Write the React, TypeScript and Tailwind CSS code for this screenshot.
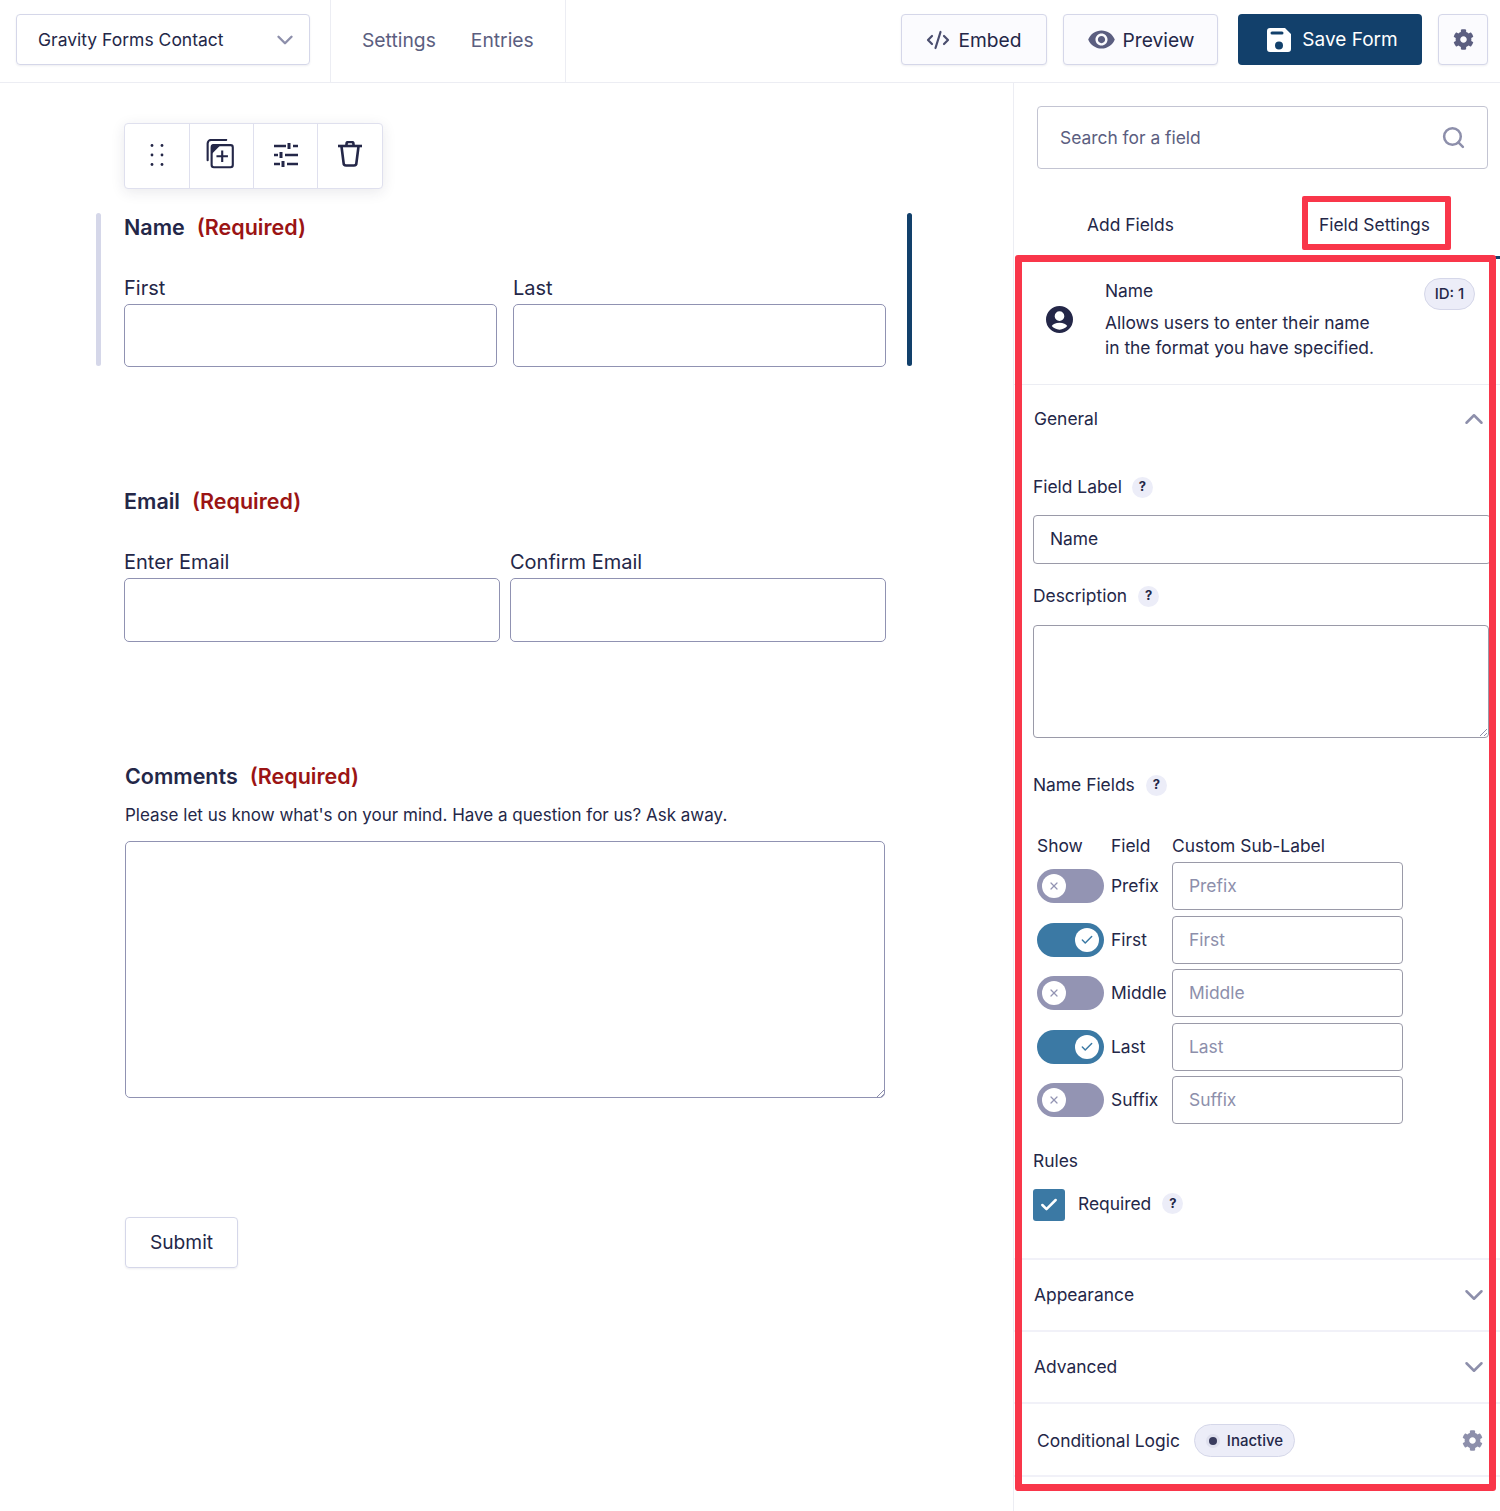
import { Check, ChevronDown, ChevronUp, CodeXml, Search, X } from 'lucide-react'
import { FaCog } from 'react-icons/fa'
import { MdVisibility } from 'react-icons/md'

const subFields = [
  { name: 'Prefix', on: false },
  { name: 'First', on: true },
  { name: 'Middle', on: false },
  { name: 'Last', on: true },
  { name: 'Suffix', on: false },
]

function Help() {
  return (
    <span className="w-[21px] h-[21px] rounded-full bg-[#ecedf8] text-[#242748] text-[13px] font-bold flex items-center justify-center">
      ?
    </span>
  )
}

function Toggle({ on }: { on: boolean }) {
  return (
    <span
      className={`w-[67px] h-[34px] rounded-full flex items-center px-[5px] ${
        on ? 'bg-[#3b79a4] justify-end' : 'bg-[#9394b3] justify-start'
      }`}
    >
      <span className="w-6 h-6 rounded-full bg-white flex items-center justify-center">
        {on ? (
          <Check className="w-3.5 h-3.5 text-[#3b79a4]" strokeWidth={2.5} />
        ) : (
          <X className="w-3 h-3 text-[#9394b3]" strokeWidth={2.5} />
        )}
      </span>
    </span>
  )
}

function ResizeHandle() {
  return (
    <svg viewBox="0 0 8 8" className="absolute right-px bottom-px w-2 h-2 stroke-[#8d8fab] fill-none">
      <path d="M1 8 8 1M5 8l3-3" />
    </svg>
  )
}

function SaveIcon() {
  return (
    <svg viewBox="0 0 24 24" className="w-6 h-6">
      <path
        fill="#fff"
        fillRule="evenodd"
        d="M3 0h15l6 6v15a3 3 0 0 1-3 3H3a3 3 0 0 1-3-3V3a3 3 0 0 1 3-3Zm2 3.500a1.500 1.500 0 0 0 0 3h10a1.500 1.500 0 0 0 0-3H5Zm7 10a4 4 0 1 0 0 8 4 4 0 0 0 0-8Z"
      />
    </svg>
  )
}

function GripIcon() {
  return (
    <svg viewBox="0 0 16 24" className="w-4 h-6 -mt-0.5 fill-[#242748]">
      <circle cx="3" cy="2.500" r="1.400" />
      <circle cx="13" cy="2.500" r="1.400" />
      <circle cx="3" cy="12" r="1.400" />
      <circle cx="13" cy="12" r="1.400" />
      <circle cx="3" cy="21.500" r="1.400" />
      <circle cx="13" cy="21.500" r="1.400" />
    </svg>
  )
}

function DuplicateIcon() {
  return (
    <svg viewBox="0 0 32 34" className="w-[30px] h-[30px] -mt-1 -ml-1 fill-none stroke-[#242748]" strokeWidth="2.400">
      <path d="M2 24V5a4 4 0 0 1 4-4h17" strokeLinecap="round" />
      <rect x="6.500" y="7" width="24" height="25" rx="2.500" />
      <path d="M7 15V9.500A2.500 2.500 0 0 1 9.500 7H15Z" fill="#242748" />
      <path d="M18.500 13v13M12 19.500h13" />
    </svg>
  )
}

function SlidersIcon() {
  return (
    <svg viewBox="0 0 24 24" className="w-6 h-6 -mt-0.5 fill-[#242748] stroke-[#242748]" strokeWidth="2.400">
      <path d="M0 3h12M19 3h5M0 12h4M11 12h13M0 21h6M13 21h11" />
      <path d="M15 0v6M7 9v6M9 18v6" strokeWidth="3" />
    </svg>
  )
}

function TrashIcon() {
  return (
    <svg viewBox="0 0 24 26" className="w-6 h-[26px] -mt-1 fill-none stroke-[#242748]" strokeWidth="2.600">
      <path d="M0 5h24" />
      <path d="M8.500 4.500V3a2 2 0 0 1 2-2h3a2 2 0 0 1 2 2v1.500" />
      <path d="M3.500 5.500 5.600 22a2.500 2.500 0 0 0 2.500 2.500h7.800a2.500 2.500 0 0 0 2.500-2.500l2.100-16.500" strokeLinejoin="round" />
    </svg>
  )
}

function UserIcon() {
  return (
    <svg viewBox="0 0 28 28" className="w-[27px] h-[27px]">
      <path
        fill="#242748"
        fillRule="evenodd"
        d="M14 0a14 14 0 1 1 0 28 14 14 0 0 1 0-28Zm0 5.500a5 5 0 1 0 0 10 5 5 0 0 0 0-10Zm0 11.800c-3.900 0-7 1.600-8 3.500 1.900 2.300 4.800 3.700 8 3.700s6.100-1.400 8-3.700c-1-1.900-4.100-3.500-8-3.500Z"
      />
    </svg>
  )
}

function FormInput({ className }: { className: string }) {
  return <div className={`border border-[#9092b2] rounded-[5px] bg-white ${className}`} />
}

function FieldTitle({ label }: { label: string }) {
  return (
    <div className="flex gap-3 font-semibold text-[21.500px] leading-7">
      <span className="text-[#242748]">{label}</span>
      <span className="text-[#9b1414]">(Required)</span>
    </div>
  )
}

function Section({ label }: { label: string }) {
  return (
    <div className="h-[72px] border-b-2 border-[#f1f1f8] pl-5 pr-[11px] pt-px flex items-center justify-between text-[17.400px] text-[#242748]">
      {label}
      <ChevronDown className="w-[30px] h-[30px] text-[#8d8fab]" strokeWidth={2} />
    </div>
  )
}

export default function App() {
  return (
    <div className="relative w-[1500px] h-[1511px] overflow-hidden bg-white font-['Inter',sans-serif] text-[#242748]">
      {/* Header */}
      <header className="h-[83px] border-b border-[#ecedf3] flex items-stretch">
        <div className="w-[331px] border-r border-[#ecedf3] pl-4 pb-[3px] flex items-center">
          <div className="w-[294px] h-[51px] border border-[#d5d7e9] rounded-[4px] shadow-[0_1px_2px_rgba(36,39,72,0.08)] pl-[21px] pr-[11px] flex items-center justify-between text-[17.500px]">
            <span className="mt-[2px]">Gravity Forms Contact</span>
            <ChevronDown className="w-[26px] h-[26px] text-[#8d8fab]" strokeWidth={2.2} />
          </div>
        </div>
        <div className="w-[235px] border-r border-[#ecedf3] pl-[31px] pb-[3px] flex items-center gap-[35px] text-[19.300px] text-[#5b5e80]">
          <span className="mt-px">Settings</span>
          <span className="mt-px">Entries</span>
        </div>
        <div className="flex-1 flex items-center justify-end gap-4 pr-3 pb-[3px]">
          <div className="w-[146px] h-[51px] border border-[#d5d7e9] rounded-[4px] bg-[#fbfbfe] shadow-[0_1px_2px_rgba(36,39,72,0.08)] flex items-center justify-center gap-2 text-[19.200px]">
            <CodeXml className="w-6 h-6 text-[#4a4d6e]" strokeWidth={2.2} />
            <span className="mt-px">Embed</span>
          </div>
          <div className="w-[155px] h-[51px] border border-[#d5d7e9] rounded-[4px] bg-[#fbfbfe] shadow-[0_1px_2px_rgba(36,39,72,0.08)] flex items-center justify-center gap-[7px] text-[19.200px]">
            <MdVisibility className="w-[29px] h-[29px] text-[#5b5e80]" />
            <span className="mt-px">Preview</span>
          </div>
          <div className="w-[184px] h-[51px] rounded-[4px] bg-[#12406b] text-white flex items-center justify-center gap-[11px] pl-[5px] text-[19px] ml-1">
            <SaveIcon />
            <span className="mt-px">Save Form</span>
          </div>
          <div className="w-[50px] h-[51px] border border-[#d5d7e9] rounded-[4px] bg-[#fbfbfe] shadow-[0_1px_2px_rgba(36,39,72,0.08)] flex items-center justify-center">
            <FaCog className="w-[21px] h-[21px] text-[#5b5e80]" />
          </div>
        </div>
      </header>

      <div className="flex h-[1428px]">
        {/* Form canvas */}
        <main className="w-[1013px] pl-[124px] pt-10">
          <div className="w-[259px] h-[66px] flex border border-[#dfe0ee] rounded-[4px] bg-white shadow-[0_3px_14px_rgba(36,39,72,0.1)]">
            <div className="w-[65px] border-r border-[#dfe0ee] flex items-center justify-center"><GripIcon /></div>
            <div className="w-[64px] border-r border-[#dfe0ee] flex items-center justify-center"><DuplicateIcon /></div>
            <div className="w-[64px] border-r border-[#dfe0ee] flex items-center justify-center"><SlidersIcon /></div>
            <div className="flex-1 flex items-center justify-center"><TrashIcon /></div>
          </div>

          {/* Name */}
          <div className="relative mt-[24px] h-[153px] w-[762px]">
            <span className="absolute -left-[28px] top-0 w-[5px] h-[153px] rounded-[3px] bg-[#d5d7e9]" />
            <span className="absolute left-[783px] top-0 w-[5px] h-[153px] rounded-[3px] bg-[#12406b]" />
            <FieldTitle label="Name" />
            <div className="flex gap-4 mt-[33px]">
              <div className="w-[373px]">
                <div className="text-[20px] leading-7 mb-[2px]">First</div>
                <FormInput className="h-[63px]" />
              </div>
              <div className="w-[373px]">
                <div className="text-[20px] leading-7 mb-[2px]">Last</div>
                <FormInput className="h-[63px]" />
              </div>
            </div>
          </div>

          {/* Email */}
          <div className="mt-[121px] w-[762px]">
            <FieldTitle label="Email" />
            <div className="flex gap-[10px] mt-[33px]">
              <div className="w-[376px]">
                <div className="text-[20px] leading-7 mb-[2px]">Enter Email</div>
                <FormInput className="h-[64px]" />
              </div>
              <div className="w-[376px]">
                <div className="text-[20px] leading-7 mb-[2px]">Confirm Email</div>
                <FormInput className="h-[64px]" />
              </div>
            </div>
          </div>

          {/* Comments */}
          <div className="mt-[120px] ml-px w-[760px]">
            <FieldTitle label="Comments" />
            <p className="mt-[13px] text-[17px] leading-6">
              Please let us know what's on your mind. Have a question for us? Ask away.
            </p>
            <div className="relative mt-[14px]">
              <FormInput className="h-[257px]" />
              <ResizeHandle />
            </div>
          </div>

          <div className="mt-[119px] ml-px w-[113px] h-[51px] border border-[#d5d7e9] rounded-[4px] shadow-[0_1px_2px_rgba(36,39,72,0.08)] flex items-center justify-center text-[19.200px]">
            Submit
          </div>
        </main>

        {/* Sidebar */}
        <aside className="w-[487px] border-l border-[#ecedf3] text-[17.400px]">
          <div className="pl-[23px] pt-[23px]">
            <div className="w-[451px] h-[63px] border border-[#c3c4d2] rounded-[4px] pl-[22px] pr-[21px] flex items-center justify-between text-[#5b5e80]">
              <span className="mt-px">Search for a field</span>
              <Search className="w-[25px] h-[25px] text-[#8d8fab]" strokeWidth={2.4} />
            </div>
          </div>
          <div className="flex h-[90px]">
            <div className="w-[243px] pl-[73px] pt-[43px]">Add Fields</div>
            <div className="flex-1 pl-[62px] pt-[43px] border-b-[3px] border-[#12406b]">Field Settings</div>
          </div>

          <div className="h-[126px] border-b border-[#ecedf3] pl-8 pr-[25px] flex">
            <div className="w-[59px] pt-[47px]"><UserIcon /></div>
            <div className="flex-1 pt-[19px]">
              <div className="mb-[6px] leading-[26px]">Name</div>
              <div className="leading-[25px]">Allows users to enter their name</div>
              <div className="leading-[25px]">in the format you have specified.</div>
            </div>
            <span className="mt-[19px] w-[51px] h-[32px] rounded-full bg-[#ecedf8] border border-[#d5d7e9] flex items-center justify-center text-[15px] font-medium">
              ID: 1
            </span>
          </div>

          <div className="h-[68px] pl-5 pr-[11px] flex items-center justify-between">
            General
            <ChevronUp className="w-[30px] h-[30px] text-[#8d8fab]" strokeWidth={2} />
          </div>

          <div className="pl-[19px]">
            <div className="flex items-center gap-[10px] h-[24px] mt-[22px]">Field Label <Help /></div>
            <div className="mt-[16px] w-[458px] h-[49px] border border-[#9a9aa8] rounded-[4px] pl-4 flex items-center">Name</div>
            <div className="flex items-center gap-[11px] h-[24px] mt-[20px]">Description <Help /></div>
            <div className="relative mt-[17px] w-[456px] h-[113px] border border-[#9a9aa8] rounded-[4px]">
              <ResizeHandle />
            </div>
            <div className="flex items-center gap-[11px] h-[24px] mt-[35px]">Name Fields <Help /></div>

            <div className="ml-1 mt-[37px] grid grid-cols-[74px_61px_231px] gap-y-[5.400px] items-center">
              <div className="leading-[23px]">Show</div>
              <div className="leading-[23px]">Field</div>
              <div className="leading-[23px] whitespace-nowrap">Custom Sub-Label</div>
              {subFields.map((f) => (
                <div key={f.name} className="contents">
                  <Toggle on={f.on} />
                  <span>{f.name}</span>
                  <div className="h-[48px] border border-[#9a9aa8] rounded-[4px] pl-4 flex items-center text-[#8d8fab]">
                    {f.name}
                  </div>
                </div>
              ))}
            </div>

            <div className="mt-[25px] h-[24px] leading-[24px]">Rules</div>
            <div className="mt-[16px] flex items-center">
              <span className="w-[32px] h-[32px] rounded-[3px] bg-[#3b79a4] flex items-center justify-center">
                <Check className="w-[20px] h-[20px] text-white" strokeWidth={3} />
              </span>
              <span className="ml-[13px] mr-[11px] -mt-0.5">Required</span>
              <span className="-mt-0.5"><Help /></span>
            </div>
          </div>

          <div className="mt-[37px] border-t-2 border-[#f1f1f8]">
            <Section label="Appearance" />
            <Section label="Advanced" />
            <div className="h-[73px] border-b-2 border-[#f1f1f8] pl-[23px] pr-[17px] pt-[3px] flex items-center">
              Conditional Logic
              <span className="ml-[14px] w-[101px] h-[33px] rounded-full bg-[#ecedf8] border border-[#d5d7e9] flex items-center pl-[14px] gap-[10px] text-[15px] font-medium">
                <span className="w-2 h-2 rounded-full bg-[#3a3c5e] ring-[3px] ring-[#dfe0ee]" />
                Inactive
              </span>
              <FaCog className="ml-auto w-[21px] h-[21px] text-[#8d8fab]" />
            </div>
          </div>
        </aside>
      </div>

      {/* Red annotation boxes */}
      <div className="absolute left-[1302px] top-[196px] w-[149px] h-[54px] border-[6px] border-[#f9364a] rounded-[2px]" />
      <div className="absolute left-[1015px] top-[255px] w-[481px] h-[1236px] border-[7px] border-[#f9364a] rounded-[3px]" />
    </div>
  )
}
